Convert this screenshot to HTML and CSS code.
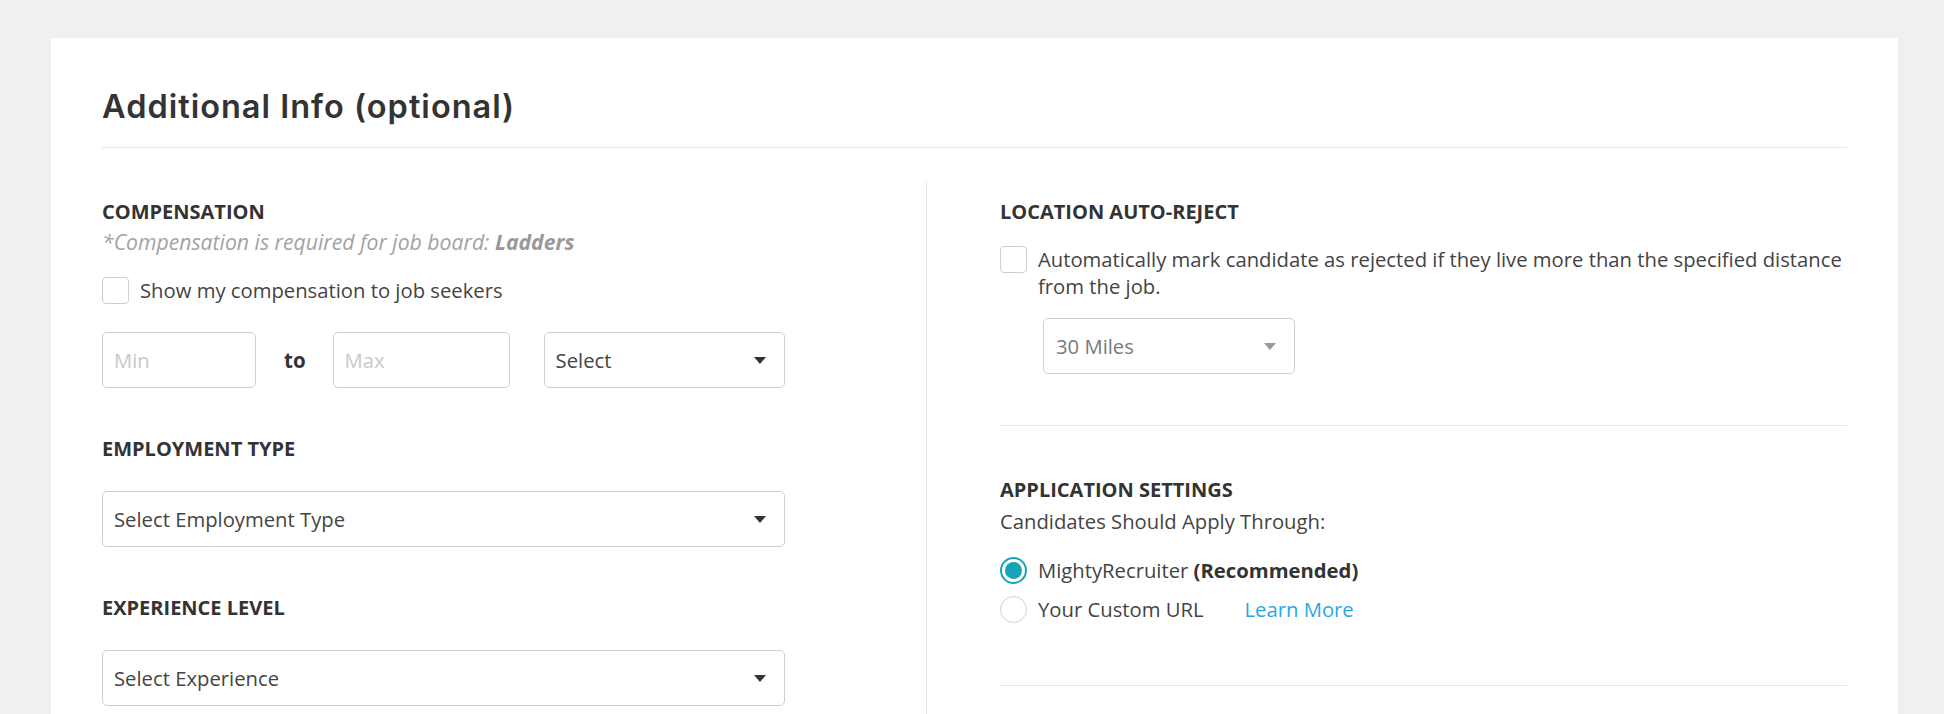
FILE: index.html
```html
<!DOCTYPE html>
<html lang="en">
<head>
<meta charset="utf-8">
<title>Additional Info</title>
<link rel="stylesheet" href="styles.css">
</head>
<body>
<div class="card">
  <h1 class="title">Additional Info (optional)</h1>
  <div class="columns">
    <div class="col col-left">
      <section class="group">
        <div class="label">COMPENSATION</div>
        <div class="note">*Compensation is required for job board: <b>Ladders</b></div>
        <div class="check-row">
          <span class="box"></span>
          <span class="check-text">Show my compensation to job seekers</span>
        </div>
        <div class="range-row">
          <input class="field field-min" type="text" placeholder="Min">
          <span class="to">to</span>
          <input class="field field-max" type="text" placeholder="Max">
          <div class="select select-period"><span>Select</span><span class="caret"></span></div>
        </div>
      </section>
      <section class="group">
        <div class="label">EMPLOYMENT TYPE</div>
        <div class="select select-wide"><span>Select Employment Type</span><span class="caret"></span></div>
      </section>
      <section class="group">
        <div class="label">EXPERIENCE LEVEL</div>
        <div class="select select-wide"><span>Select Experience</span><span class="caret"></span></div>
      </section>
    </div>
    <div class="col col-right">
      <section class="rgroup">
        <div class="label">LOCATION AUTO-REJECT</div>
        <div class="check-row check-row-top">
          <span class="box"></span>
          <span class="check-text">Automatically mark candidate as rejected if they live more than the specified distance from the job.</span>
        </div>
        <div class="select select-miles"><span>30 Miles</span><span class="caret caret-light"></span></div>
      </section>
      <div class="divider"></div>
      <section class="rgroup rgroup-app">
        <div class="label">APPLICATION SETTINGS</div>
        <div class="sub">Candidates Should Apply Through:</div>
        <div class="radio-row radio-first">
          <span class="radio radio-on"><span class="dot"></span></span>
          <span>MightyRecruiter <b class="strong">(Recommended)</b></span>
        </div>
        <div class="radio-row">
          <span class="radio"></span>
          <span>Your Custom URL</span>
          <a class="link" href="#">Learn More</a>
        </div>
      </section>
      <div class="divider divider-bottom"></div>
    </div>
  </div>
</div>
</body>
</html>
```
FILE: styles.css
```css
html, body {
  margin: 0;
  padding: 0;
}

body {
  background: #eef0f1;
  font-family: "Open Sans", "Liberation Sans", sans-serif;
  color: #444;
  overflow: hidden;
}

.card {
  margin: 38px 46px 0 51px;
  background: #fff;
  padding: 49px 51px 0;
  min-height: 760px;
}

.title {
  margin: 0;
  font-family: Inter, "Open Sans", sans-serif;
  font-weight: 600;
  font-size: 32.5px;
  line-height: 40px;
  letter-spacing: 1px;
  color: #333;
  padding-bottom: 20px;
  border-bottom: 1px solid #e6e7e8;
}

.columns {
  display: flex;
  margin-top: 34px;
}

.col {
  box-sizing: border-box;
  padding-top: 17px;
}

.col-left {
  width: 825px;
  flex: none;
  border-right: 1px solid #e6e7e8;
  min-height: 560px;
}

.col-right {
  flex: 1;
  padding-left: 73px;
}

.label {
  font-weight: 700;
  font-size: 20px;
  line-height: 26px;
  color: #333;
}

.note {
  margin-top: 4px;
  font-style: italic;
  font-size: 21.2px;
  line-height: 26px;
  color: #a3a3a3;
}

.note b {
  font-weight: 700;
  color: #999;
}

.check-row {
  display: flex;
  align-items: center;
  gap: 11px;
  margin-top: 22px;
  font-size: 20.25px;
  line-height: 27px;
  color: #444;
}

.check-row-top {
  align-items: flex-start;
  margin-top: 21px;
}

.box {
  width: 27px;
  height: 27px;
  box-sizing: border-box;
  border: 1px solid #cfcfcf;
  border-radius: 4px;
  flex: none;
  background: #fff;
}

.range-row {
  display: flex;
  align-items: center;
  margin-top: 28px;
  width: 683px;
}

.field {
  height: 56px;
  box-sizing: border-box;
  border: 1px solid #cfcfcf;
  border-radius: 5px;
  font-family: "Open Sans", sans-serif;
  font-size: 20.25px;
  padding: 0 11px;
  color: #444;
  background: #fff;
  outline: none;
}

.field::placeholder {
  color: #c9c9c9;
}

.field-min {
  width: 154px;
}

.to {
  margin: 0 27px 0 28px;
  font-weight: 700;
  font-size: 20.5px;
  color: #333;
}

.field-max {
  width: 177px;
}

.select {
  height: 56px;
  box-sizing: border-box;
  border: 1px solid #cfcfcf;
  border-radius: 5px;
  padding: 0 18px 0 11px;
  display: flex;
  align-items: center;
  justify-content: space-between;
  font-size: 20.25px;
  color: #444;
  background: #fff;
}

.select-period {
  margin-left: 34px;
  width: 241px;
}

.caret {
  width: 0;
  height: 0;
  border-left: 6px solid transparent;
  border-right: 6px solid transparent;
  border-top: 7px solid #333;
}

.caret-light {
  border-top-color: #9a9a9a;
}

.group + .group {
  margin-top: 48px;
}

.select-wide {
  margin-top: 29px;
  width: 683px;
}

.select-miles {
  margin-top: 18px;
  margin-left: 43px;
  width: 252px;
  color: #7a7a7a;
  padding-left: 12px;
}

.divider {
  margin-top: 51px;
  border-top: 1px solid #e6e7e8;
}

.rgroup-app {
  margin-top: 51px;
}

.sub {
  margin-top: 5px;
  font-size: 20.25px;
  line-height: 26px;
  color: #444;
}

.radio-row {
  display: flex;
  align-items: center;
  gap: 11px;
  margin-top: 11px;
  font-size: 20.25px;
  line-height: 28px;
  color: #444;
}

.radio-first {
  margin-top: 22px;
}

.radio {
  width: 27px;
  height: 27px;
  box-sizing: border-box;
  border: 1px solid #cfcfcf;
  border-radius: 50%;
  flex: none;
  display: flex;
  align-items: center;
  justify-content: center;
}

.radio-on {
  border: 2px solid #17a2b5;
}

.dot {
  width: 17px;
  height: 17px;
  border-radius: 50%;
  background: #17a2b5;
}

.strong {
  font-weight: 700;
  color: #333;
}

.link {
  margin-left: 30px;
  color: #2aa8de;
  text-decoration: none;
}

.divider-bottom {
  margin-top: 62px;
}
```
